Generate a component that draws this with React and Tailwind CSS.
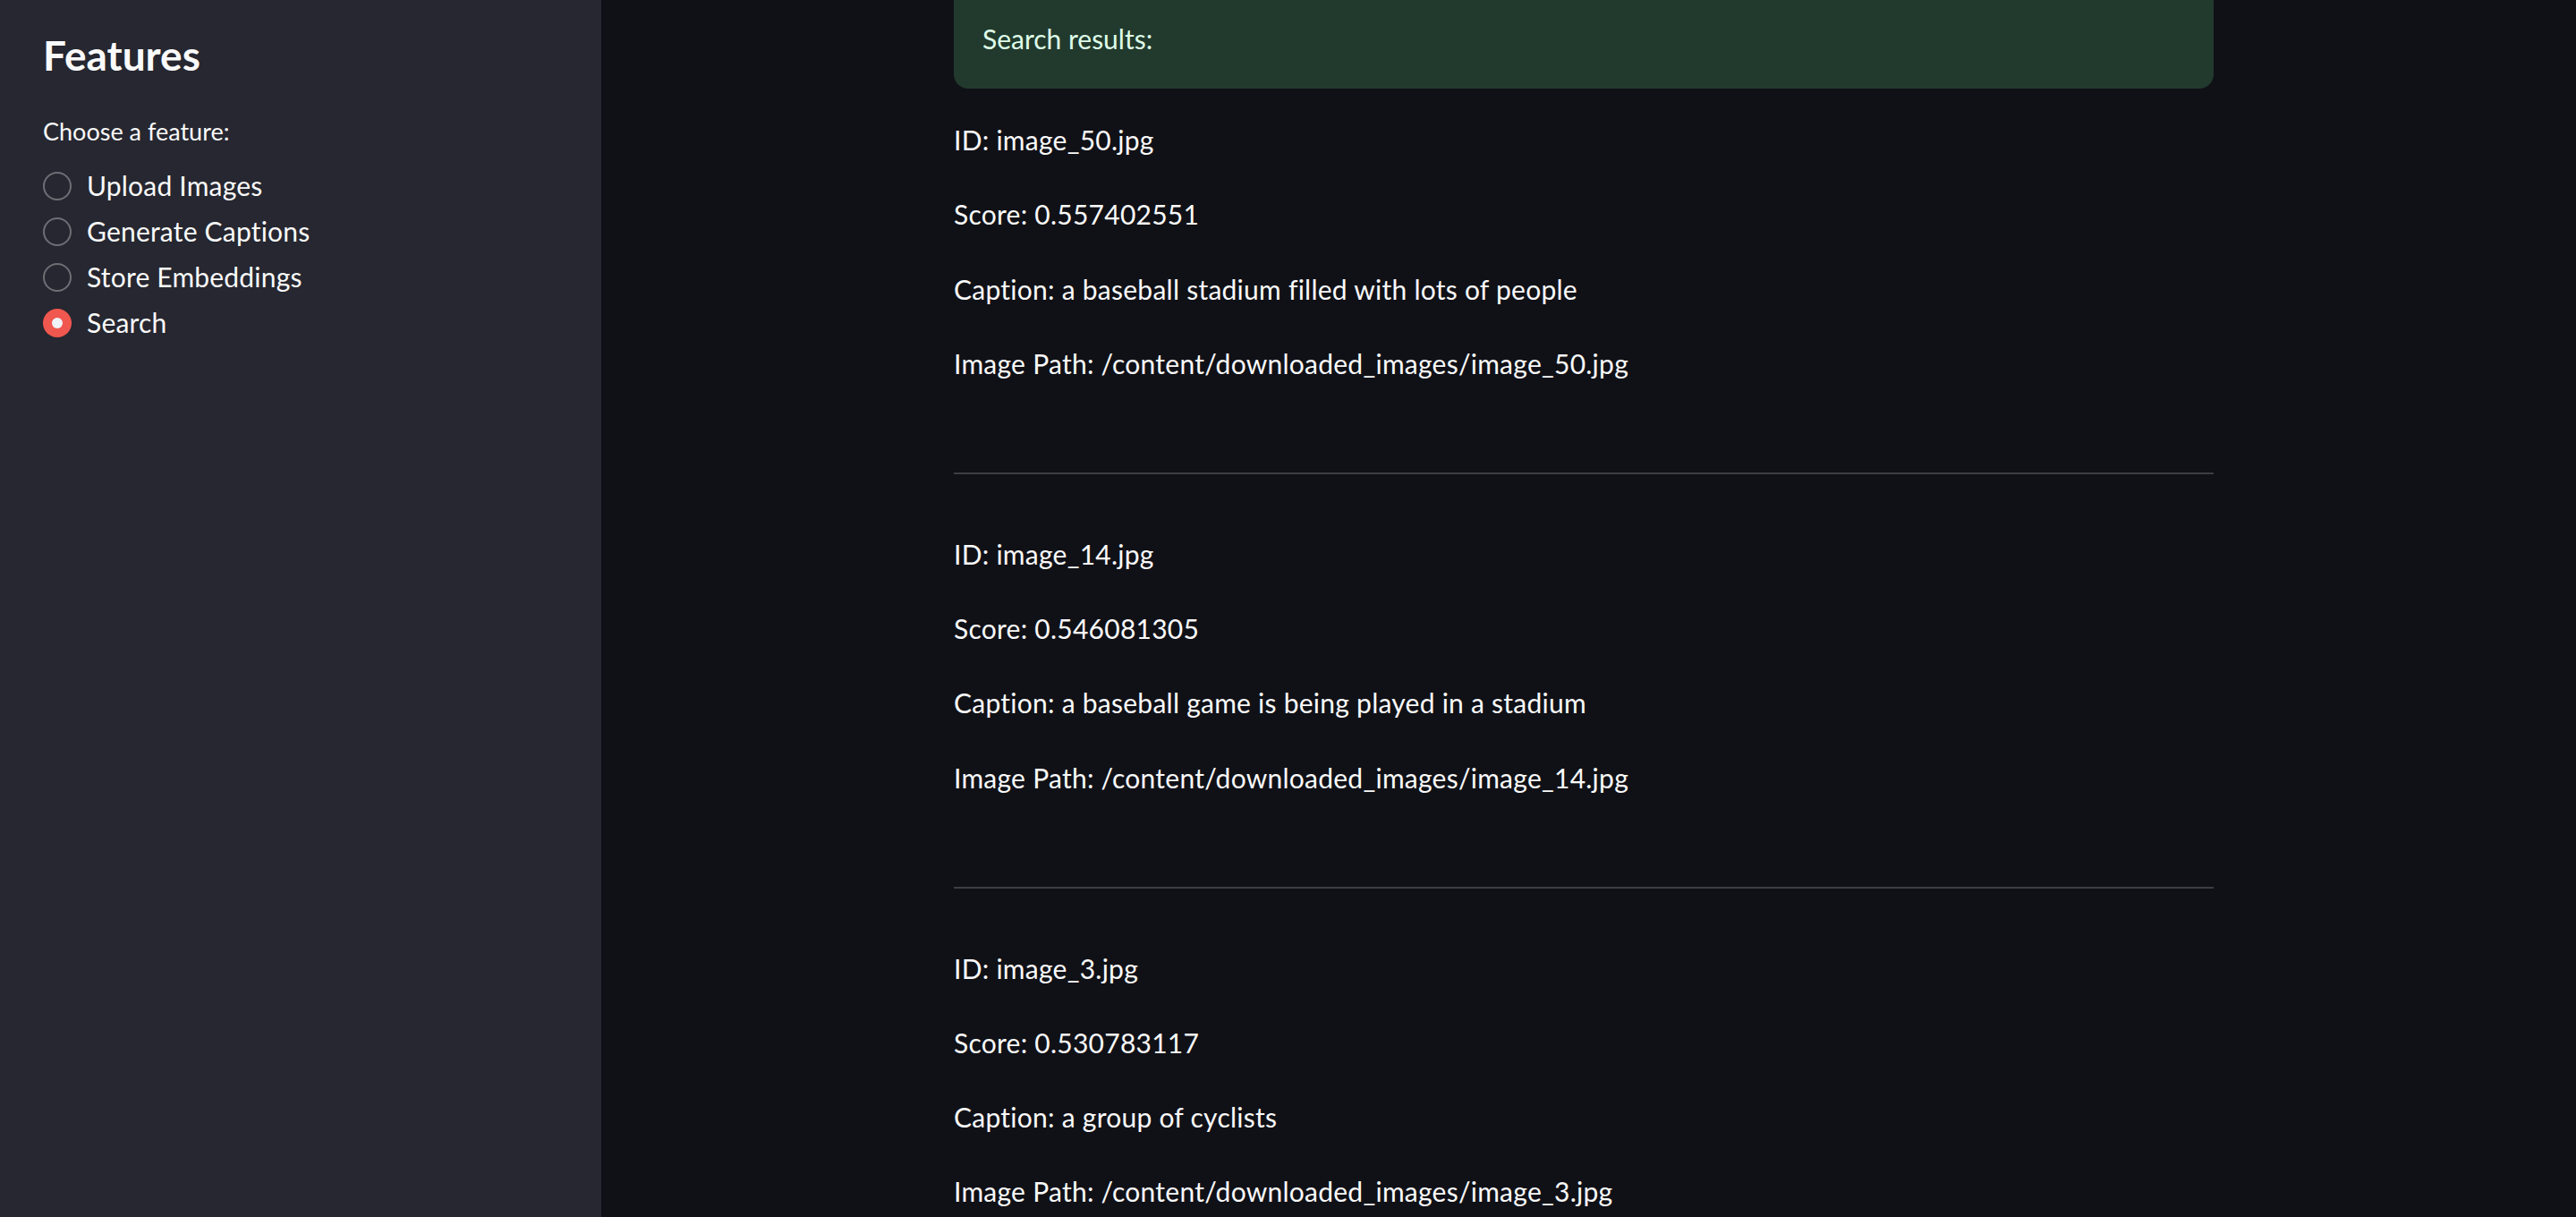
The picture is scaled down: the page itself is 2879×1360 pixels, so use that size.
import React from "react";

const results = [
  {
    id: "image_50.jpg",
    score: "0.557402551",
    caption: "a baseball stadium filled with lots of people",
  },
  {
    id: "image_14.jpg",
    score: "0.546081305",
    caption: "a baseball game is being played in a stadium",
  },
  {
    id: "image_3.jpg",
    score: "0.530783117",
    caption: "a group of cyclists",
  },
];

const options = ["Upload Images", "Generate Captions", "Store Embeddings", "Search"];

function Radio({ label, checked }) {
  return (
    <div className="flex h-[51px] items-center">
      {checked ? (
        <div className="flex h-[32px] w-[32px] items-center justify-center rounded-full bg-[#f0574f]">
          <div className="h-[12px] w-[12px] rounded-full bg-[#f0f2f6]" />
        </div>
      ) : (
        <div className="h-[32px] w-[32px] rounded-full border-2 border-[#6e6f75]" />
      )}
      <span className="ml-[17px] text-[30px] leading-[51px] tracking-[0.2px] text-[#fafafa]">{label}</span>
    </div>
  );
}

function P({ children }) {
  return <p className="text-[30px] leading-[51.2px] tracking-[0.25px] text-[#fafafa]">{children}</p>;
}

export default function App() {
  return (
    <div
      className="flex h-[1360px] w-full overflow-hidden bg-[#101117]"
      style={{ fontFamily: "Lato, 'Noto Sans', sans-serif" }}
    >
      <aside className="flex w-[672px] shrink-0 flex-col bg-[#262730] pl-[48px] pt-[32px]">
        <h2 className="text-[46px] font-bold leading-[60px] text-[#fafafa]">Features</h2>
        <div className="mt-[35px] text-[27px] leading-[40px] text-[#fafafa]">Choose a feature:</div>
        <div className="mt-[15px] flex flex-col">
          {options.map((o) => (
            <Radio key={o} label={o} checked={o === "Search"} />
          ))}
        </div>
      </aside>
      <main className="flex flex-1 justify-center pr-[11px]">
        <div className="flex w-full max-w-[1472px] flex-col gap-[32px] px-[32px]">
          <div className="-mt-[14px] rounded-[16px] bg-[#223a2d] px-[32px] pb-[30px] pt-[32px]">
            <p className="text-[30px] leading-[51.2px] text-[#dffde9]">Search results:</p>
          </div>
          {results.map((r) => (
            <React.Fragment key={r.id}>
              <P>ID: {r.id}</P>
              <P>Score: {r.score}</P>
              <P>Caption: {r.caption}</P>
              <P>Image Path: /content/downloaded_images/{r.id}</P>
              <div className="pb-[32px] pt-[64px]">
                <div className="h-[2px] bg-[#3d3e44]" />
              </div>
            </React.Fragment>
          ))}
        </div>
      </main>
    </div>
  );
}
